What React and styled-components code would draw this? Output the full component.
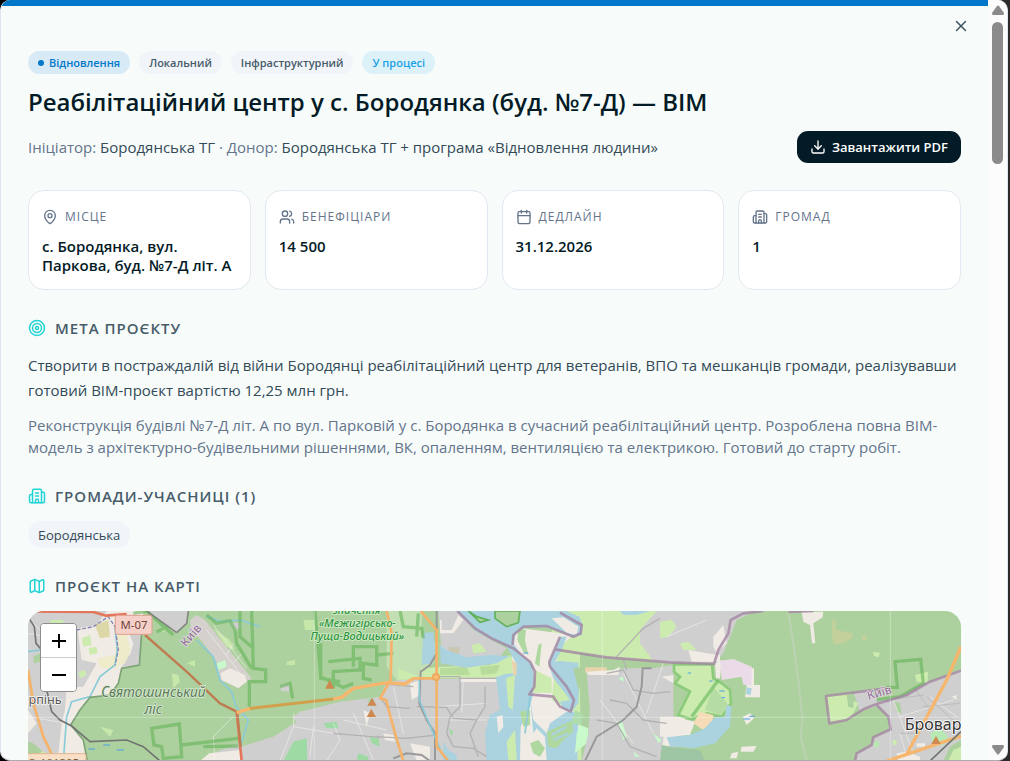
import React from 'react'
import styled, { createGlobalStyle } from 'styled-components'
import { MapPin, Users, Calendar, Building2, Target, Map, Download, X } from 'lucide-react'

const GlobalStyle = createGlobalStyle`
  * {
    box-sizing: border-box;
  }

  body {
    margin: 0;
    background: linear-gradient(90deg, #000 50%, #2b2b2b 50%);
    font-family: 'Open Sans', 'Noto Sans', sans-serif;
    color: #031b26;
  }

  h1, h2, p, ul, dl, dd {
    margin: 0;
    padding: 0;
  }
`

const Dialog = styled.div`
  position: relative;
  display: flex;
  height: 100vh;
  margin-right: 2px;
  border: 1px solid #dfe6f0;
  border-top: 0;
  border-bottom-color: #a9adb0;
  border-radius: 10px;
  background: #f7fcfb;
  overflow: hidden;
`

const Body = styled.main`
  flex: 1;
  min-width: 0;
  padding: 45px 27px 28px;
  border-top: 6px solid #0077c8;
  overflow: hidden;
`

const CloseButton = styled.button`
  position: absolute;
  top: 14px;
  right: 34px;
  display: flex;
  padding: 3px;
  border: 0;
  background: none;
  color: #3f5563;
`

const Tags = styled.ul`
  display: flex;
  gap: 9px;
  list-style: none;
`

const tagTones = {
  primary: { bg: '#d8eaf5', fg: '#0077c8' },
  neutral: { bg: '#f1f4f9', fg: '#475b69' },
  info: { bg: '#ddf1f9', fg: '#1ba1e6' },
}

const Tag = styled.li`
  display: flex;
  align-items: center;
  gap: 5px;
  height: 23px;
  padding: 0 10px;
  border-radius: 12px;
  font-size: 11px;
  font-weight: 600;
  white-space: nowrap;
  background: ${({ $tone }) => tagTones[$tone].bg};
  color: ${({ $tone }) => tagTones[$tone].fg};
`

const Dot = styled.span`
  width: 6px;
  height: 6px;
  border-radius: 50%;
  background: currentColor;
`

const Title = styled.h1`
  margin-top: 12px;
  font-size: 24px;
  line-height: 32px;
  font-weight: 600;
`

const MetaRow = styled.div`
  display: flex;
  align-items: center;
  justify-content: space-between;
  gap: 16px;
  margin-top: 13px;
`

const Meta = styled.p`
  font-size: 15px;
  line-height: 22px;
  color: #64748b;

  span {
    color: #334a57;
  }
`

const DownloadButton = styled.button`
  display: flex;
  align-items: center;
  gap: 6px;
  height: 32px;
  padding: 0 13px;
  border: 0;
  border-radius: 11px;
  background: #031b26;
  color: #fff;
  font-family: inherit;
  font-size: 13px;
  font-weight: 600;
  white-space: nowrap;
`

const Facts = styled.dl`
  display: grid;
  grid-template-columns: repeat(4, 1fr);
  gap: 14px;
  margin-top: 27px;
`

const Fact = styled.div`
  min-height: 100px;
  padding: 17px 13px 13px;
  border: 1px solid #e2e8f0;
  border-radius: 16px;
  background: #fff;
`

const FactLabel = styled.dt`
  display: flex;
  align-items: center;
  gap: 7px;
  font-size: 12px;
  line-height: 18px;
  letter-spacing: 1px;
  text-transform: uppercase;
  color: #64748b;
`

const FactValue = styled.dd`
  && {
    margin-top: 11px;
  }
  font-size: 15px;
  line-height: 19px;
  font-weight: 600;
`

const Section = styled.section`
  margin-top: 28px;
`

const SectionTitle = styled.h2`
  display: flex;
  align-items: center;
  gap: 9px;
  margin-bottom: 15px;
  font-size: 15px;
  line-height: 20px;
  font-weight: 600;
  letter-spacing: 1px;
  text-transform: uppercase;
  color: #475b69;

  svg {
    color: #22d3d6;
  }
`

const Goal = styled.p`
  font-size: 15px;
  line-height: 25px;
  color: #334a57;
`

const Description = styled.p`
  && {
    margin-top: 11px;
  }
  font-size: 15px;
  line-height: 22px;
  color: #64748b;
`

const Community = styled.span`
  display: flex;
  align-items: center;
  width: fit-content;
  height: 27px;
  padding: 0 10px;
  border-radius: 14px;
  background: #f1f4f9;
  font-size: 13px;
  color: #334a57;
`

const MapFrame = styled.div`
  position: relative;
  height: 300px;
  border-radius: 16px;
  overflow: hidden;
  background: #add19e;
`

const MapSvg = styled.svg`
  display: block;
  width: 100%;
  height: 100%;
`

const ZoomControl = styled.div`
  position: absolute;
  top: 12px;
  left: 12px;
  display: flex;
  flex-direction: column;
  width: 37px;
  border: 1px solid #8b8f8a;
  border-radius: 4px;
  overflow: hidden;
`

const ZoomButton = styled.button`
  display: flex;
  align-items: center;
  justify-content: center;
  height: 33px;
  padding: 0;
  border: 0;
  background: #fff;
  color: #000;

  & + & {
    height: 34px;
    border-top: 1px solid #ccc;
  }
`

const Scrollbar = styled.div`
  display: flex;
  flex-direction: column;
  align-items: center;
  width: 19px;
  padding: 5px 0;
  background: #fcfcfc;
`

const Thumb = styled.div`
  width: 11px;
  height: 142px;
  margin: 7px 0 auto;
  border-radius: 6px;
  background: #8b8b8b;
`

const tags = [
  { label: 'Відновлення', tone: 'primary', dot: true },
  { label: 'Локальний', tone: 'neutral' },
  { label: 'Інфраструктурний', tone: 'neutral' },
  { label: 'У процесі', tone: 'info' },
]

const facts = [
  { label: 'Місце', icon: MapPin, value: 'с. Бородянка, вул. Паркова, буд. №7-Д літ. А' },
  { label: 'Бенефіціари', icon: Users, value: '14 500' },
  { label: 'Дедлайн', icon: Calendar, value: '31.12.2026' },
  { label: 'Громад', icon: Building2, value: '1' },
]

// Three map units per pixel
const MapDrawing = () => (
  <MapSvg viewBox="84 33 2799 900" preserveAspectRatio="xMinYMin slice" role="img" aria-label="Карта проєкту">
    <g stroke="none">
      {/* Irpin side */}
      <path fill="#f0ece4" d="M84 33H430L425 100L418 195L365 205L355 250L330 285L270 290L240 330L212 375L250 420L262 483H84Z" />
      <path fill="#d0d0d0" d="M84 33H320L290 75L232 85L245 180L290 190L250 260L200 262L195 330L185 370L175 460H84V400L110 370L84 330Z" />
      <path fill="#cfcfcf" d="M375 45L425 60L425 110L415 195L365 200L392 160L400 130L385 95L350 80Z" />
      <path fill="#eeeccb" d="M350 105H380L392 150L375 190L352 200L340 205L300 205L292 175L345 165Z" />
      <path fill="#cdebb0" d="M245 115L270 105L275 135L250 140ZM265 145L290 140L292 160L270 165ZM150 80L175 75L178 90L155 95ZM84 430L120 450L150 465H84ZM235 215L255 210L260 225L240 235ZM150 60H190V68H150Z" />
      <path fill="#add19e" d="M84 425L100 430L128 455L110 462H84ZM100 170L120 160V185L102 190Z" />
      <path fill="#dcd7a6" d="M285 75L325 60L330 110L300 115Z" />
      {/* Airfield */}
      <path fill="#cfcfcf" d="M440 33H565L560 70L530 98Z" />
      <path fill="#d4d1ce" d="M570 60L590 45L615 60L755 235L715 262L660 240L650 185L610 130L572 85Z" />
      <path fill="#efeae3" d="M662 220L690 205L735 225L740 245L715 265L665 240Z" />
      <path fill="#c8facc" d="M650 190L675 180L680 200L655 210Z" />
      <path fill="#cfcfcf" d="M692 70L722 68L725 82L705 90ZM842 255L868 250L868 275L842 272Z" />
      <path fill="#c6e6ab" d="M515 220L535 225L540 245L520 265ZM640 85L690 120L705 150L680 140ZM480 90L500 85L490 98ZM860 185L885 180V195H860ZM910 60H945V90H915ZM560 190L585 180V200ZM300 380L340 390L330 410ZM480 270H500V290H480Z" />
      <path fill="#c4e2b4" d="M1160 33H1265V110L1310 130L1300 190L1255 230L1190 240L1160 200Z" />
      {/* Right-bank city */}
      <path fill="#cfcfcf" d="M720 430L860 365L900 335L1020 305L1140 290L1160 245L1250 235L1310 236H1490L1505 320L1465 370L1470 430L1500 483H630L650 455Z" />
      <path fill="#f0ece4" d="M628 460L720 450L728 483H600ZM1150 400L1180 405L1185 425L1155 420ZM1230 250L1265 240L1260 285L1235 300ZM1380 235H1495V246H1380ZM1090 330L1110 340L1100 380ZM1230 430L1290 440V483H1250Z" />
      <path fill="#add19e" d="M722 350L870 345L890 365L820 410L722 440Z" />
      <path fill="#9edba6" d="M880 425L920 415L922 483H850ZM970 370L1010 365L1015 385H980ZM1100 300L1120 295L1125 320ZM1110 410L1135 415L1140 440L1115 430ZM1075 460L1105 470V483H1070ZM1345 385L1360 395L1355 408Z" />
      {/* North quarter */}
      <path fill="#cfcfcf" d="M1315 33H1375L1420 90L1520 145L1500 170L1400 190L1325 160Z" />
      <path fill="#cdebb0" d="M1195 205L1255 230L1265 205L1330 200L1470 195L1530 165L1548 190L1540 235H1310L1195 240ZM1415 135L1440 130L1460 155L1420 160Z" />
      <path fill="#b6db9c" d="M1320 205L1400 200L1410 225H1320ZM1440 200L1500 195L1490 220L1445 225Z" />
      <path fill="#f0ece4" d="M1320 60L1325 60V90H1355L1375 45L1390 60L1360 100L1320 100Z" />
      <path fill="#cdc7b0" d="M1345 142H1380L1375 165H1350Z" />
    </g>

    {/* Floodplain east of the river */}
    <path fill="#cdebb0" d="M1660 33H2010V190L1820 172L1740 160L1740 300L1745 483H1640L1650 150Z" />
    <path fill="#f0ece4" d="M1530 80L1720 105L1680 140L1665 200L1655 300L1740 345L1730 483H1550L1545 330Z" />
    {/* Dnipro */}
    <g fill="#aad3df">
      <path d="M1370 33H1700L1738 50L1748 75L1745 105L1720 112L1690 98L1640 83L1580 80L1548 100L1540 130L1565 165L1598 195L1603 230L1600 280L1590 320L1562 380L1560 483H1460L1455 400L1470 345L1500 330L1488 232L1515 222L1540 220L1546 185L1520 140L1430 95Z" />
      <path d="M1680 110L1700 110L1685 150L1665 185L1680 183L1735 188L1740 230L1735 310L1715 335L1690 328L1680 305L1710 300L1695 280L1660 235L1645 190Z" />
      <path d="M1320 135L1340 150L1400 172L1470 165L1530 168L1490 190L1400 203L1322 190Z" />
      <path d="M1270 100L1300 95L1305 150L1298 190L1265 195L1268 130Z" />
      <path d="M1590 290L1600 360L1640 400L1650 370L1700 335H1735L1732 483H1640L1635 410L1610 385L1600 400Z" />
      <path d="M1330 425L1345 450L1370 465V483H1330ZM1860 33H1950L1910 45H1870ZM1965 125L2010 115V150L1970 145Z" />
    </g>
    <g>
      <path fill="#f0ece4" d="M1490 350L1508 345L1510 380L1495 400ZM1655 55L1690 52L1735 80L1730 105L1700 98Z" />
      <path fill="#cdebb0" d="M1605 210L1655 235V278H1600ZM1518 235L1545 225L1538 330L1525 320ZM1520 425L1545 390L1550 483H1525Z" />
      <path fill="#add19e" d="M1485 33H1560L1555 68L1520 80L1485 55ZM1405 33L1430 50L1465 60L1440 67Z" stroke="#63b15c" strokeWidth="5" />
      <path fill="#b0d8a0" d="M1555 85L1578 90L1575 120L1585 165L1570 155L1552 120ZM1640 395L1715 362L1720 395L1690 420L1670 445L1645 440ZM1590 430L1615 420L1635 445L1620 470L1600 460ZM1560 335L1590 330V375L1570 380ZM1615 135L1625 130L1618 200L1605 190Z" />
      <path fill="none" stroke="#aad3df" strokeWidth="7" d="M1655 405L1700 380M1660 420L1705 400" />
      <path fill="#aedcae" d="M1725 330L1750 345L1740 375L1715 370Z" />
      <path fill="#c8facc" d="M1740 375L1765 385V425L1725 460L1730 400Z" />
      <path fill="#e9d3ae" d="M1535 180L1550 190V225L1540 225ZM1755 202H1820V218H1755Z" />
      <path fill="#add19e" d="M1720 205L1750 200L1755 240L1735 270Z" />
    </g>

    {/* Left-bank city */}
    <path fill="#cfcfcf" d="M1760 220L1830 220L1870 205H1960L2020 195V350L2040 360L2020 483H1745L1765 400L1770 330ZM1920 90L1970 33H2265L2210 60L2190 110L2170 160L2145 188L2010 190L1960 182L1920 130Z" />
    <path fill="#f0ece4" d="M1760 215L1840 210L1860 200L1855 225L1765 225ZM1985 230L2020 225V250ZM2000 350L2060 350L2010 440L1995 483H1980ZM2140 110L2170 75L2180 130L2150 160L2140 140ZM2065 150L2120 160L2160 165V185H2075Z" />
    <path fill="#c8facc" d="M1850 365L1865 360L1880 410L1870 420ZM1960 400L1985 420L1975 430ZM1900 455L1920 470H1905ZM1855 235L1870 230V245Z" />
    <path fill="#cdebb0" d="M1980 65L2015 60L2030 80L2005 110L1980 115ZM2040 130L2065 125L2090 150H2050Z" />
    <path fill="#cdebb0" stroke="#8ccb7d" strokeWidth="8" d="M2022 193H2136L2140 235L2165 250L2190 270L2193 310L2165 350L2120 340L2075 358L2035 345L2070 275L2025 250L2040 230L2022 215Z" />
    <path fill="#b5dca4" d="M2140 260L2165 290L2190 320L2160 345L2115 330Z" />
    <path fill="none" stroke="#74bf67" strokeWidth="10" opacity=".7" d="M2155 240L2075 350" />
    <path fill="#f0ece4" d="M2145 190L2165 180L2160 235H2148ZM2020 350L2085 365L2070 405L2010 410L1995 400ZM1980 350H2010V410H1980Z" />
    <path fill="#f6dcb6" d="M2100 335L2140 345L2135 375L2110 390L2080 370Z" />
    <path fill="#aad3df" d="M2180 315L2195 320L2190 380L2145 430L2080 445L2010 438L2000 412L2070 405L2115 385L2145 352L2175 350Z" />
    <path fill="#9fc6a4" d="M1985 435L2040 445L2100 450L2115 483H1980Z" />
    <path fill="#ebdbe8" d="M2160 182L2200 177L2255 200L2260 255H2230L2225 230L2165 240Z" />
    <path fill="#f0ece4" d="M2255 205H2262V255H2280V292H2235L2240 255H2255ZM2405 36L2470 35L2468 52L2440 70L2446 130H2436L2430 75L2410 65ZM2228 350L2250 340L2262 355L2240 375ZM2225 440L2270 438L2260 455H2222ZM2195 460L2215 455L2210 475H2190Z" />
    <path fill="#aad3df" d="M2240 262L2255 265L2252 285L2238 282Z" />
    <path fill="#c3d09c" d="M2497 60L2505 58L2508 90L2560 100L2555 115L2530 130L2500 132L2495 95ZM2585 105H2600V122H2588Z" />
    <path fill="#cdebb0" d="M2618 155L2640 158L2636 172L2622 168Z" />

    {/* Brovary */}
    <path fill="#cfcfcf" d="M2560 275L2670 262L2690 290L2780 248L2883 210V483H2565L2570 460L2615 430L2620 410L2668 390L2665 350L2630 318L2580 335Z" />
    <path fill="#cdebb0" d="M2478 288L2560 278L2555 300L2575 310L2560 340L2535 362L2488 368Z" />
    <path fill="#add19e" d="M2630 300L2700 290L2775 250L2770 180L2690 185V265H2610ZM2683 305L2700 310L2705 340L2690 335ZM2850 440L2883 420V483H2830ZM2540 285L2562 280L2560 325L2545 320Z" />
    <path fill="#add19e" d="M2565 335L2630 320L2662 352L2666 388L2618 408L2612 432L2568 460L2540 440Z" />
    <path fill="#cdebb0" d="M2745 225L2785 215L2782 250L2750 245ZM2860 450L2883 440V483H2845ZM2678 420H2690V435H2678Z" />
    <path fill="#b8e8b4" d="M2790 400L2820 385L2845 410L2830 435H2800ZM2620 425L2638 422L2635 445L2622 440Z" />
    <path fill="#f0ece4" d="M2690 460L2720 455L2760 470V483H2695ZM2855 290L2870 285V300ZM2750 430H2775V440H2750Z" />

    {/* Minor streets */}
    <g fill="none" stroke="#f6f4f1" strokeWidth="3" opacity=".6">
      <path d="M640 75L740 205M620 90L720 220M700 130L680 165M725 160L700 190M880 380L1000 400M882 340L880 380L840 483M640 410L700 350M640 410L645 480M940 380L930 470M1000 370L1020 420L980 483M84 100L200 120M100 70L230 200M130 290L190 300M84 350L200 370" />
      <path d="M1030 360L1160 390M1060 340L1120 480M1180 260L1210 400M1390 240L1385 340M1310 320L1460 310M1350 360H1460M1870 220L1960 400M1800 300L1900 430M1990 190L1940 340M2000 110L2120 60M2680 300L2740 460M2700 350L2860 300M2790 290L2870 350M2720 470L2700 400" />
      <path d="M2365 35L2380 130L2395 240L2408 360L2402 410L2420 483" strokeWidth="6" stroke="#c9d4c3" />
    </g>
    <g fill="none" stroke="#b3b2b2" strokeWidth="4">
      <path d="M1310 230H1380V320L1350 350L1340 400L1360 440L1420 445L1460 470M1250 320L1340 322L1360 355L1430 360L1455 320V260M1430 360L1410 400L1435 470M1140 250L1240 260M1140 290L1160 320L1230 325M1130 410L1220 415L1310 405M1000 400L1140 412M1380 235H1490" />
      <path d="M1820 220L1870 210L1900 270L1960 280L2010 275M1830 300L1880 310L1930 360L2000 370M1790 360L1850 370L1890 440L1970 470M1850 170L1930 85L1980 55M1870 180L1880 210" />
      <path d="M2660 300L2770 285M2770 320L2880 310M2700 400L2760 400M2780 290L2870 370M2740 260L2790 330" strokeWidth="2" />
    </g>
    <path fill="none" stroke="#999" strokeWidth="6" d="M1310 33V160L1290 195L1262 215L1258 310L1280 360L1305 400V483M1180 475L1220 460L1265 465L1290 483M1755 483L1790 410L1870 360L1910 320L1925 260L1928 205H1955" />
    <g fill="none" stroke="#8bcbd9" strokeWidth="5">
      <path d="M345 85L352 150L345 195L300 230L270 290L215 305L200 350L190 483M590 120L640 170L660 240L695 275L708 320L745 360L730 410L720 440" />
      <path d="M620 48L660 65L720 60L780 80M84 155L120 150M1258 240V300L1300 400L1330 470M1590 290L1575 400" />
    </g>
    <path fill="none" stroke="#8a87b5" strokeWidth="4" strokeDasharray="12 5" d="M230 90L280 80L325 50L345 80L355 150L345 195" />

    {/* Protected forest outlines */}
    <g fill="none" stroke="#67b25c" strokeWidth="10" opacity=".6">
      <path d="M720 33V110L755 140M755 33L760 205L797 210V245H748V320M705 90L710 130L755 205M620 45L650 70L690 62L705 90" />
      <path d="M840 260L870 250L878 295M455 385L538 372L545 470L490 475L485 440L462 435ZM545 435L715 415M715 438L610 440" />
      <path d="M945 33L962 230L1030 262L1060 250M962 130V235L1020 245M985 185L1080 175V210L1000 215V265M1060 200V140H1130V195L1090 190V235L1115 240M1130 165L1180 160" />
      <path d="M400 40L440 33L470 60L520 105M470 95L505 80M1200 33L1210 80L1265 85L1270 115M1255 40L1250 110" />
      <path d="M2630 300L2700 290L2770 250L2762 178L2685 185L2692 262L2660 262" />
    </g>
    <path fill="none" stroke="#7fa378" strokeWidth="5" d="M425 100L418 195L365 205L355 250L330 285L270 292L240 330L212 375L250 420L262 483" />
    <path fill="none" stroke="#737573" strokeWidth="5" d="M84 50L103 80L108 130L125 150M140 270L155 335L180 360L215 378L270 425L380 420L430 440L480 483" />

    {/* Administrative borders */}
    <g fill="none" stroke="#a486a3" strokeWidth="8" opacity=".8" strokeLinejoin="round">
      <path d="M1372 33L1425 85L1480 118L1540 145L1590 185L1605 215L1603 260L1588 283L1660 290L1680 320L1712 335L1722 300L1700 260L1650 200L1648 185L1680 110M1538 135L1540 105L1570 80L1640 78L1720 110L1742 100L1745 75L1680 38M1665 148L1740 160L1820 172L2010 187L2142 192L2155 150L2185 100L2192 60L2230 40L2290 33" />
      <path d="M2883 212L2790 245L2720 285L2630 312L2590 328L2540 360L2488 370L2478 288L2660 265M2630 315L2665 350L2672 388L2620 412L2615 435L2570 460L2565 483M2365 36L2440 33" />
      <path d="M530 98L560 70L565 33M440 33L530 98" stroke="#777" strokeWidth="5" />
    </g>

    {/* Main roads */}
    <g fill="none" strokeLinejoin="round">
      <path stroke="#e3765c" strokeWidth="8" d="M84 34L280 36L318 47L380 42M710 335L725 483" />
      <path stroke="#bd7d52" strokeWidth="7" d="M435 105L560 215L660 310L710 335M712 340L722 440" />
      <path stroke="#f4b26a" strokeWidth="8" d="M84 210L100 310L130 410L165 483M1262 33L1310 90V440L1345 483M1160 33L1175 100L1172 240L1140 295L1158 300L1185 400L1210 483M1240 235H1310" />
      <path stroke="#d2a04d" strokeWidth="9" d="M745 326L1000 297" />
      <path stroke="#f6b66e" strokeWidth="10" d="M710 338L750 326M1000 297L1025 292L1060 265L1160 248L1215 252L1240 235M2883 140L2840 240L2720 463L2660 483M2720 463L2883 408" />
      <circle cx="1308" cy="231" r="9" stroke="#f0a85d" strokeWidth="6" fill="#f6c27e" />
      <path stroke="#6f7770" strokeWidth="5" d="M2883 395L2790 483" />
    </g>
    <path stroke="#fff" strokeWidth="2" opacity=".45" d="M84 352H2883M1807 33V483M2671 33V483M943 33V483" />
    <path stroke="#4da0ea" strokeWidth="3" d="M265 447H285M310 435H330M350 450H372M2230 357H2250M2248 349H2264M2158 273H2174M2165 293H2175M2128 243H2138M2063 219H2073M1570 159H1585" />
    <path fill="#cf8850" d="M989 240L1003 266H975ZM1116 293L1130 317H1102ZM1114 327L1128 351H1100ZM2808 408L2822 432H2794Z" />

    {/* Labels */}
    <rect x="346" y="46" width="110" height="57" rx="6" fill="#f5d0c8" stroke="#df9f90" strokeWidth="3" />
    <rect x="70" y="461" width="188" height="60" rx="6" fill="#f8dfc6" stroke="#e2b58c" strokeWidth="3" />
    <g fontFamily="'Noto Sans', sans-serif" textAnchor="middle" paintOrder="stroke" strokeLinejoin="round">
      <text x="402" y="88" fontSize="34" fill="#70433c">M-07</text>
      <text x="160" y="502" fontSize="34" fill="#7a5c3c">О-101305</text>
      <text x="130" y="312" fontSize="38" fill="#555" stroke="#fff" strokeWidth="4">Ірпінь</text>
      <g fontStyle="italic" fontSize="41" fill="#5d7a5c" stroke="#d9ead2" strokeWidth="5">
        <text x="460" y="291">Святошинський</text>
        <text x="460" y="342">ліс</text>
      </g>
      <g fontStyle="italic" fontSize="33" fontWeight="500" fill="#2f9440" stroke="#d3ecc8" strokeWidth="5">
        <text x="1070" y="41">значення</text>
        <text x="1072" y="80">«Межигірсько-</text>
        <text x="1072" y="120">Пуща-Водицький»</text>
      </g>
      <g fontSize="36" fill="#8b6a8d" stroke="#eee4ee" strokeWidth="4">
        <text transform="translate(582 114) rotate(-50)">Київ</text>
        <text transform="translate(2641 290) rotate(-16)">Київ</text>
      </g>
      <text x="2714" y="391" fontSize="48" textAnchor="start" fill="#333" stroke="#fff" strokeWidth="5">Бровари</text>
    </g>
  </MapSvg>
)

const App = () => {
  return (
    <>
      <GlobalStyle />
      <Dialog role="dialog" aria-labelledby="project-title">
        <Body>
          <Tags>
            {tags.map((tag) => (
              <Tag key={tag.label} $tone={tag.tone}>
                {tag.dot && <Dot />}
                {tag.label}
              </Tag>
            ))}
          </Tags>
          <Title id="project-title">Реабілітаційний центр у с. Бородянка (буд. №7-Д) — BIM</Title>
          <MetaRow>
            <Meta>
              Ініціатор: <span>Бородянська ТГ</span> · Донор:{' '}
              <span>Бородянська ТГ + програма «Відновлення людини»</span>
            </Meta>
            <DownloadButton type="button">
              <Download size={16} />
              Завантажити PDF
            </DownloadButton>
          </MetaRow>

          <Facts>
            {facts.map((fact) => (
              <Fact key={fact.label}>
                <FactLabel>
                  <fact.icon size={16} />
                  {fact.label}
                </FactLabel>
                <FactValue>{fact.value}</FactValue>
              </Fact>
            ))}
          </Facts>

          <Section>
            <SectionTitle>
              <Target size={18} />
              Мета проєкту
            </SectionTitle>
            <Goal>
              Створити в постраждалій від війни Бородянці реабілітаційний центр для ветеранів, ВПО та
              мешканців громади, реалізувавши готовий BIM-проєкт вартістю 12,25 млн грн.
            </Goal>
            <Description>
              Реконструкція будівлі №7-Д літ. А по вул. Парковій у с. Бородянка в сучасний реабілітаційний
              центр. Розроблена повна BIM-модель з архітектурно-будівельними рішеннями, ВК, опаленням,
              вентиляцією та електрикою. Готовий до старту робіт.
            </Description>
          </Section>

          <Section>
            <SectionTitle>
              <Building2 size={18} />
              Громади-учасниці (1)
            </SectionTitle>
            <Community>Бородянська</Community>
          </Section>

          <Section>
            <SectionTitle>
              <Map size={18} />
              Проєкт на карті
            </SectionTitle>
            <MapFrame>
              <MapDrawing />
              <ZoomControl>
                <ZoomButton type="button" aria-label="Збільшити">
                  <svg width="14" height="14" viewBox="0 0 14 14" stroke="currentColor" strokeWidth="2">
                    <path d="M0 7H14M7 0V14" />
                  </svg>
                </ZoomButton>
                <ZoomButton type="button" aria-label="Зменшити">
                  <svg width="14" height="14" viewBox="0 0 14 14" stroke="currentColor" strokeWidth="2">
                    <path d="M0 7H14" />
                  </svg>
                </ZoomButton>
              </ZoomControl>
            </MapFrame>
          </Section>
        </Body>
        <Scrollbar aria-hidden="true">
          <svg width="12" height="10" viewBox="0 0 12 10" fill="#8b8b8b">
            <path d="M5 1Q6 0 7 1L12 8Q12 10 11 10H1Q0 10 0 8Z" />
          </svg>
          <Thumb />
          <svg width="12" height="10" viewBox="0 0 12 10" fill="#8b8b8b">
            <path d="M5 9Q6 10 7 9L12 2Q12 0 11 0H1Q0 0 0 2Z" />
          </svg>
        </Scrollbar>
        <CloseButton type="button" aria-label="Закрити">
          <X size={18} strokeWidth={2} />
        </CloseButton>
      </Dialog>
    </>
  )
}

export default App
